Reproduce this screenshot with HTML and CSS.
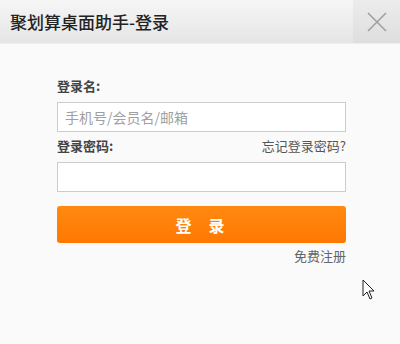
FILE: index.html
```html
<!DOCTYPE html>
<html lang="zh-CN">
<head>
  <meta charset="UTF-8">
  <title>聚划算桌面助手-登录</title>
  <link rel="stylesheet" href="styles.css">
</head>
<body>
  <div class="window">
    <div class="titlebar">
      <div class="title">聚划算桌面助手-登录</div>
      <div class="close">
        <svg width="20" height="20" viewBox="0 0 20 20">
          <path d="M1 1 L19 19 M19 1 L1 19" stroke="#a0a0a0" stroke-width="1.6" fill="none"/>
        </svg>
      </div>
    </div>

    <div class="form">
      <div class="label-row">
        <span class="label">登录名:</span>
      </div>
      <input class="field" type="text" placeholder="手机号/会员名/邮箱">
      <div class="label-row">
        <span class="label">登录密码:</span>
        <a class="link" href="#">忘记登录密码?</a>
      </div>
      <input class="field" type="password">
      <button class="submit">登录</button>
      <div class="register">
        <a class="link muted" href="#">免费注册</a>
      </div>
    </div>

    <svg class="cursor" width="14" height="22" viewBox="0 0 14 22">
      <path d="M1 1 L1 17 L5 13 L8 20 L10 19 L7 12 L12 12 Z" fill="#fff" stroke="#222" stroke-width="1"/>
    </svg>
  </div>
</body>
</html>
```

FILE: styles.css
```css
body {
  margin: 0;
  font-family: "Noto Sans CJK SC", "Noto Sans", sans-serif;
  background: #fafafa;
  color: #333;
}

.window {
  position: relative;
  width: 400px;
  height: 344px;
  background: #fafafa;
}

.titlebar {
  display: flex;
  height: 43px;
  background: linear-gradient(#f6f6f6, #e5e5e5);
  border-bottom: 1px solid #eeeeee;
}

.title {
  flex: 1;
  padding-left: 10px;
  line-height: 43px;
  font-size: 17px;
  font-weight: 500;
  color: #222;
}

.close {
  width: 47px;
  display: flex;
  align-items: center;
  justify-content: center;
  background: linear-gradient(#ececec, #dedede);
}

.form {
  display: flex;
  flex-direction: column;
  width: 289px;
  margin: 34px 0 0 57px;
}

.label-row {
  display: flex;
  justify-content: space-between;
  align-items: center;
  height: 16px;
  line-height: 16px;
  margin-bottom: 8px;
}

.label {
  font-size: 13px;
  font-weight: bold;
  color: #444;
}

.link {
  font-size: 13px;
  color: #555;
  text-decoration: none;
}

.field {
  box-sizing: border-box;
  height: 30px;
  margin: 0 0 6px;
  padding: 0 7px;
  border: 1px solid #cccccc;
  background: #fff;
  font-family: inherit;
  font-size: 14px;
  color: #333;
  outline: none;
}

.field::placeholder {
  color: #a0a0a0;
}

.submit {
  height: 37px;
  margin-top: 8px;
  border: none;
  border-radius: 3px;
  background: linear-gradient(#ff8a12, #ff7800);
  color: #fff;
  font-family: inherit;
  font-size: 16px;
  font-weight: bold;
  letter-spacing: 17px;
  text-indent: 14px;
  cursor: pointer;
}

.register {
  display: flex;
  justify-content: flex-end;
  margin-top: 3px;
}

.muted {
  color: #666;
}

.cursor {
  position: absolute;
  left: 362px;
  top: 279px;
}
```
